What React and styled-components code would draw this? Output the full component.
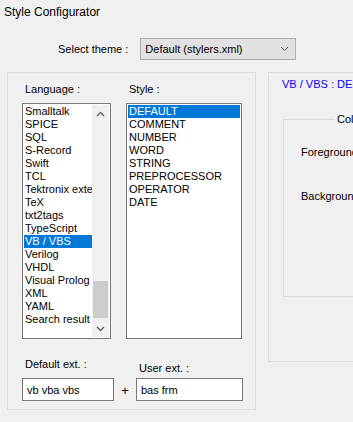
import React from "react";
import styled, { createGlobalStyle } from "styled-components";

const GlobalStyle = createGlobalStyle`
  html, body {
    margin: 0;
    padding: 0;
    background: #f0f0f0;
  }
  body {
    font-family: "Liberation Sans", Arial, sans-serif;
    font-size: 11px;
    color: #000;
  }
`;

const Window = styled.div`
  width: 353px;
  height: 422px;
  overflow: hidden;
  background: #f0f0f0;
  display: flex;
  flex-direction: column;
`;

const Title = styled.div`
  padding: 6px 0 0 4px;
  line-height: 12px;
  font-size: 12px;
`;

const ThemeRow = styled.div`
  display: flex;
  align-items: center;
  margin: 20px 0 0 58px;
  gap: 12px;
`;

const Label = styled.span`
  line-height: 12px;
  white-space: nowrap;
`;

const Select = styled.div`
  width: 156px;
  height: 22px;
  box-sizing: border-box;
  border: 1px solid #adadad;
  background: #e1e1e1;
  display: flex;
  align-items: center;
  justify-content: space-between;
  padding: 0 6px 0 4px;
`;

const Body = styled.div`
  display: flex;
  margin: 12px 0 0 7px;
  gap: 12px;
`;

const GroupBox = styled.div`
  width: 249px;
  height: 338px;
  flex: none;
  box-sizing: border-box;
  border: 1px solid #dcdcdc;
  padding: 10px 0 0 14px;
  display: flex;
  flex-direction: column;
`;

const Columns = styled.div`
  display: flex;
  gap: 15px;
`;

const Column = styled.div`
  display: flex;
  flex-direction: column;
  width: ${(p) => p.$w}px;
`;

const ColLabel = styled.div`
  line-height: 12px;
  padding-left: 3px;
  margin-bottom: 8px;
`;

const ListBox = styled.div`
  height: 236px;
  box-sizing: border-box;
  border: 1px solid #7a7a7a;
  background: #fff;
  display: flex;
  padding: 1px;
  overflow: hidden;
`;

const Items = styled.div`
  flex: 1;
  min-width: 0;
  overflow: hidden;
`;

const Item = styled.div`
  height: 13px;
  line-height: 13px;
  padding-left: 1px;
  white-space: nowrap;
  overflow: hidden;
  background: ${(p) => (p.$selected ? "#0078d7" : "transparent")};
  color: ${(p) => (p.$selected ? "#fff" : "#000")};
`;

const ScrollBar = styled.div`
  width: 17px;
  background: #f0f0f0;
  display: flex;
  flex-direction: column;
`;

const ArrowBox = styled.div`
  height: 17px;
  display: flex;
  align-items: center;
  justify-content: center;
`;

const Track = styled.div`
  flex: 1;
  display: flex;
  flex-direction: column;
  justify-content: flex-end;
  padding-bottom: 2px;
`;

const Thumb = styled.div`
  height: 37px;
  margin: 0 1px;
  background: #cdcdcd;
`;

const ExtRow = styled.div`
  display: flex;
  align-items: flex-end;
  margin-top: 19px;
`;

const ExtCol = styled.div`
  display: flex;
  flex-direction: column;
  width: ${(p) => p.$w}px;
`;

const ExtLabel = styled.div`
  line-height: 12px;
  padding-left: 3px;
  margin-bottom: ${(p) => p.$mb}px;
`;

const TextInput = styled.div`
  height: ${(p) => p.$h}px;
  box-sizing: border-box;
  border: 1px solid #7a7a7a;
  background: #fff;
  padding-left: 4px;
  display: flex;
  align-items: center;
  white-space: nowrap;
`;

const Plus = styled.div`
  width: 22px;
  text-align: center;
  font-size: 13px;
  line-height: 12px;
  margin-bottom: 4px;
`;

const RightPanel = styled.div`
  width: 120px;
  height: 290px;
  flex: none;
  box-sizing: border-box;
  border: 1px solid #dcdcdc;
  border-right: none;
  padding: 5px 0 0 13px;
  display: flex;
  flex-direction: column;
`;

const StyleHeading = styled.div`
  color: #0000ff;
  line-height: 12px;
  white-space: nowrap;
`;

const ColourGroup = styled.div`
  position: relative;
  margin: 29px 0 0 1px;
  height: 150px;
  border: 1px solid #dcdcdc;
  border-right: none;
  padding: 26px 0 0 17px;
  display: flex;
  flex-direction: column;
  gap: 32px;
`;

const GroupCaption = styled.span`
  position: absolute;
  top: -7px;
  left: 51px;
  padding: 0 2px;
  background: #f0f0f0;
  line-height: 12px;
  white-space: nowrap;
`;

const Chevron = ({ up, color = "#606060", width = 1.3 }) => (
  <svg width="9" height="6" viewBox="0 0 9 6">
    <path
      d={up ? "M1 5 L4.5 1.5 L8 5" : "M1 1 L4.5 4.5 L8 1"}
      fill="none"
      stroke={color}
      strokeWidth={width}
    />
  </svg>
);

const languages = [
  "Smalltalk",
  "SPICE",
  "SQL",
  "S-Record",
  "Swift",
  "TCL",
  "Tektronix extended HEX",
  "TeX",
  "txt2tags",
  "TypeScript",
  "VB / VBS",
  "Verilog",
  "VHDL",
  "Visual Prolog",
  "XML",
  "YAML",
  "Search result",
];

const styles = [
  "DEFAULT",
  "COMMENT",
  "NUMBER",
  "WORD",
  "STRING",
  "PREPROCESSOR",
  "OPERATOR",
  "DATE",
];

export default function App() {
  return (
    <Window>
      <GlobalStyle />
      <Title>Style Configurator</Title>
      <ThemeRow>
        <Label>Select theme :</Label>
        <Select>
          <span>Default (stylers.xml)</span>
          <Chevron color="#555" width={1} />
        </Select>
      </ThemeRow>
      <Body>
        <GroupBox>
          <Columns>
            <Column $w={89}>
              <ColLabel>Language :</ColLabel>
              <ListBox>
                <Items>
                  {languages.map((l) => (
                    <Item key={l} $selected={l === "VB / VBS"}>
                      {l}
                    </Item>
                  ))}
                </Items>
                <ScrollBar>
                  <ArrowBox>
                    <Chevron up />
                  </ArrowBox>
                  <Track>
                    <Thumb />
                  </Track>
                  <ArrowBox>
                    <Chevron />
                  </ArrowBox>
                </ScrollBar>
              </ListBox>
            </Column>
            <Column $w={116}>
              <ColLabel>Style :</ColLabel>
              <ListBox>
                <Items>
                  {styles.map((s) => (
                    <Item key={s} $selected={s === "DEFAULT"}>
                      {s}
                    </Item>
                  ))}
                </Items>
              </ListBox>
            </Column>
          </Columns>
          <ExtRow>
            <ExtCol $w={92}>
              <ExtLabel $mb={8}>Default ext. :</ExtLabel>
              <TextInput $h={23}>vb vba vbs</TextInput>
            </ExtCol>
            <Plus>+</Plus>
            <ExtCol $w={107}>
              <ExtLabel $mb={4}>User ext. :</ExtLabel>
              <TextInput $h={23}>bas frm</TextInput>
            </ExtCol>
          </ExtRow>
        </GroupBox>
        <RightPanel>
          <StyleHeading>VB / VBS : DEFAULT</StyleHeading>
          <ColourGroup>
            <GroupCaption>Colour Style</GroupCaption>
            <Label>Foreground colour</Label>
            <Label>Background colour</Label>
          </ColourGroup>
        </RightPanel>
      </Body>
    </Window>
  );
}
